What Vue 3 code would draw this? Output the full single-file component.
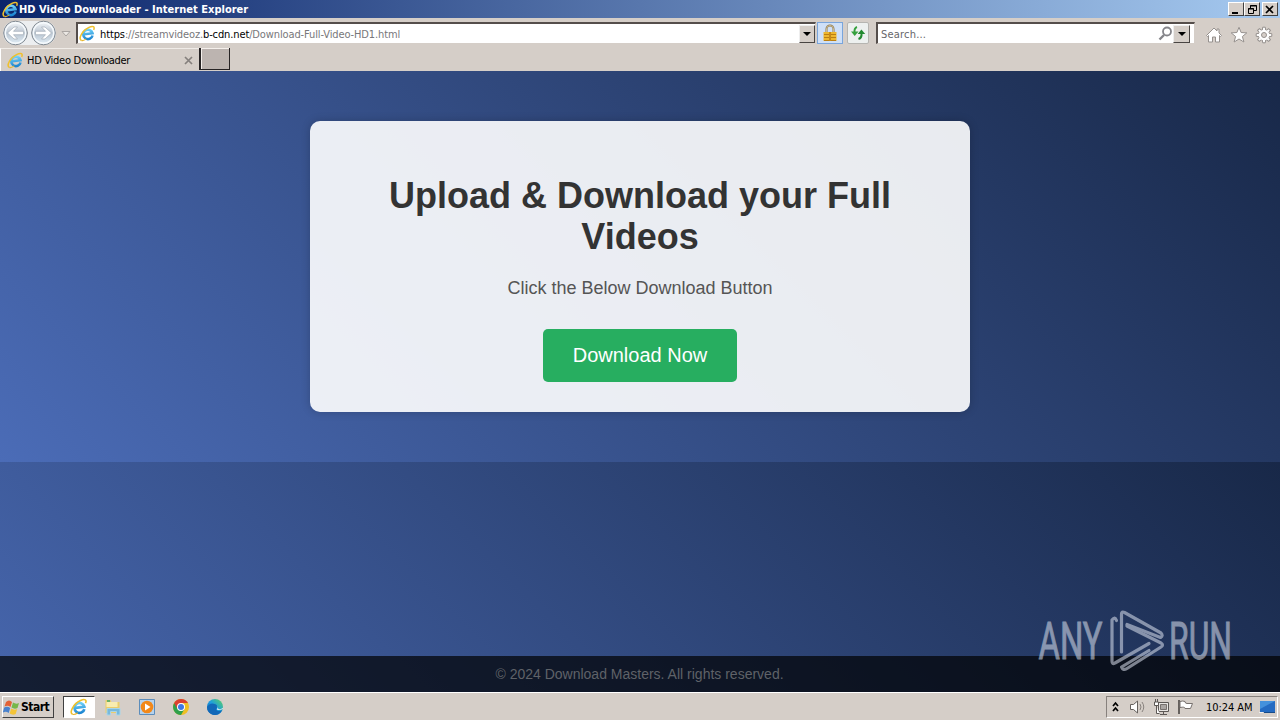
<template>
  <div class="screen">
    <svg class="defs" width="0" height="0">
      <defs>
        <linearGradient id="ieBlue" x1="0" y1="0" x2="0" y2="1">
          <stop offset="0" stop-color="#6fd0f8" />
          <stop offset="1" stop-color="#1c86d2" />
        </linearGradient>
        <linearGradient id="edgeFill" x1="0" y1="1" x2="1" y2="0">
          <stop offset="0" stop-color="#0c59a4" />
          <stop offset="0.5" stop-color="#1b9de2" />
          <stop offset="1" stop-color="#5fd35a" />
        </linearGradient>
        <linearGradient id="circleFill" x1="0" y1="0" x2="0" y2="1">
          <stop offset="0" stop-color="#f8fafc" />
          <stop offset="0.5" stop-color="#b9c4d0" />
          <stop offset="1" stop-color="#e4f1fa" />
        </linearGradient>
        <symbol id="ie" viewBox="0 0 18 18">
          <path d="M14 11.800A5 5 0 1 1 14.300 9.400H5.500" fill="none" stroke="url(#ieBlue)" stroke-width="2.700" transform="rotate(-8 9 9)" />
          <path d="M2.500 16.300C-.8 14.500 3 6 10.500 2.500c4.500-2.100 6.500-.6 5 2.700" fill="none" stroke="#efc02c" stroke-width="1.600" />
          <path d="M2.500 16.300q2.200.8 5.200-1.600" fill="none" stroke="#e6b630" stroke-width="1.200" />
        </symbol>
      </defs>
    </svg>

    <header class="titlebar">
      <svg class="title-icon" width="17" height="17"><use href="#ie" /></svg>
      <span class="title">HD Video Downloader - Internet Explorer</span>
      <div class="window-buttons">
        <button class="win"><svg width="14" height="11"><path d="M3 9h6" stroke="#000" stroke-width="2" /></svg></button>
        <button class="win"><svg width="14" height="11"><path d="M5.500 4V1.500h6v5H9M5 2h7M3.500 4.500h5v5h-5zM3 5h6" fill="none" stroke="#000" /></svg></button>
        <button class="win close"><svg width="14" height="11"><path d="M3 2l7 7M10 2l-7 7" stroke="#000" stroke-width="1.700" /></svg></button>
      </div>
    </header>

    <nav class="toolbar">
      <svg class="history" width="74" height="30">
        <path d="M15 3H44a12 12 0 0 1 0 24H15a12 12 0 0 1 0-24" fill="#eceef0" />
        <g v-for="cx in [15.5, 43.5]" :key="cx">
          <circle :cx="cx" cy="15" r="11.800" fill="url(#circleFill)" stroke="#7f878f" />
          <circle :cx="cx" cy="15" r="10.200" fill="none" stroke="#f5f9fc" stroke-width="1.400" />
        </g>
        <path d="M7.500 15l6.500-6h3.500l-4 4.300h10v3.400h-10l4 4.300H14z" fill="#fff" stroke="#a4aeb8" stroke-width=".7" />
        <path d="M51.500 15L45 9h-3.500l4 4.300h-10v3.400h10l-4 4.300H45z" fill="#fff" stroke="#a4aeb8" stroke-width=".7" />
        <path d="M62 13.500h8l-4 4.500z" fill="#ece8e4" stroke="#aaa5a2" />
      </svg>
      <div class="field address">
        <svg width="17" height="17"><use href="#ie" /></svg>
        <span class="url"><b>https</b>://streamvideoz.<b>b-cdn.net</b>/Download-Full-Video-HD1.html</span>
        <span class="dropdown"></span>
      </div>
      <span class="tool lock">
        <svg width="16" height="18">
          <path d="M4.500 8V5a3.500 3.500 0 0 1 7 0v3" fill="none" stroke="#8c7650" stroke-width="2" />
          <path d="M4.500 8V5a3.500 3.500 0 0 1 7 0v3" fill="none" stroke="#e6d9a8" stroke-width=".7" />
          <path d="M1.500 8h13v9h-13z" fill="#eeb72d" />
          <path d="M2 10.500h12M2 13.500h12M2 16.500h12" stroke="#bb7f12" />
          <path d="M7 8h2v9H7z" fill="#c68a17" />
        </svg>
      </span>
      <span class="tool refresh">
        <svg width="16" height="16">
          <path d="M7 2Q4 3 4.500 8" fill="none" stroke="#35a13d" stroke-width="2" />
          <path d="M1 6.500h7.500L4.700 11z" fill="#35a13d" />
          <path d="M8.500 14Q12 13 11.500 8" fill="none" stroke="#238a31" stroke-width="2" />
          <path d="M7.700 9h7.500L11.400 4.500z" fill="#238a31" />
        </svg>
      </span>
      <div class="field search">
        <span class="placeholder">Search...</span>
        <svg width="15" height="15"><circle cx="9" cy="5.500" r="4" fill="none" stroke="#85858a" stroke-width="1.800" /><path d="M6 9l-4.500 4.500" stroke="#85858a" stroke-width="2.400" /></svg>
        <span class="dropdown"></span>
      </div>
      <div class="commands">
        <svg width="18" height="18"><path d="M1.500 9.500L9 2l3 3V3h2v4l2.500 2.500-1 1-1-1V16h-4v-5h-3v5h-4V9.500l-1 1z" fill="#fff" stroke="#96918e" /></svg>
        <svg width="18" height="18"><path d="M9 1.300l2.100 5.200 5.700.4-4.400 3.600 1.500 5.500L9 13l-4.900 3 1.500-5.500L1.200 6.900l5.700-.4z" fill="#fff" stroke="#96918e" /></svg>
        <svg width="18" height="18">
          <path v-for="n in 8" :key="n" d="M7.300 4.500l.4-3.300h2.600l.4 3.300z" :transform="`rotate(${n * 45} 9 9)`" fill="#fff" stroke="#96918e" />
          <circle cx="9" cy="9" r="5.300" fill="#fff" />
          <circle cx="9" cy="9" r="2.500" fill="#d6cfc9" stroke="#96918e" />
        </svg>
      </div>
    </nav>

    <div class="tabs">
      <div class="tab">
        <svg width="17" height="17"><use href="#ie" /></svg>
        <span class="tab-title">HD Video Downloader</span>
        <svg class="tab-close" width="9" height="9"><path d="M1 1l7 7M8 1L1 8" stroke="#85807d" stroke-width="1.700" /></svg>
      </div>
      <div class="new-tab"></div>
    </div>

    <main class="page">
      <section class="card">
        <h1>Upload &amp; Download your Full Videos</h1>
        <p>Click the Below Download Button</p>
        <button class="download">Download Now</button>
      </section>
      <footer>© 2024 Download Masters. All rights reserved.</footer>
      <svg class="watermark" width="220" height="76" viewBox="1035 602 220 76">
        <text x="1038.500" y="659" textLength="64" lengthAdjust="spacingAndGlyphs">ANY</text>
        <text x="1169" y="659" textLength="63" lengthAdjust="spacingAndGlyphs">RUN</text>
        <g fill="none" stroke-width="3.200" stroke-linejoin="round" stroke-linecap="round">
          <path d="M1116.500 620.500Q1115 616 1112 620V661Q1112 665 1115 663L1149 643.500" />
          <path d="M1121.500 652V614Q1121.500 611 1124.500 612.500L1161 633Q1163.500 636 1160.500 637.500L1127 624.500" />
          <path d="M1127 626L1161 643Q1164 645 1161 647L1127 668.500Q1123 671 1121.500 667L1149 650.500" />
        </g>
      </svg>
    </main>

    <div class="taskbar">
      <button class="start">
        <svg width="18" height="17">
          <path d="M3 3Q6 0 9 3L7.500 8Q5 6 1.500 7.500z" fill="#e36236" />
          <path d="M10 3.500q3 2 6 .5L14.500 9q-3 1.500-6-.5z" fill="#76b74a" />
          <path d="M1.200 8.500Q4.500 7 7.200 9L5.700 14Q3 12-.2 13.500z" fill="#4a82cd" />
          <path d="M8.200 9.500q3 2 6 .5l-1.500 5q-3 1.500-6-.5z" fill="#f4c437" />
        </svg>
        <span class="start-label">Start</span>
      </button>
      <div class="apps">
        <span class="app active"><svg width="18" height="18"><use href="#ie" /></svg></span>
        <span class="app">
          <svg width="18" height="18">
            <path d="M1.500 2h5l1 2h8v11h-14z" fill="#e9cd6c" />
            <path d="M2.500 4h11v5h-11z" fill="#f8ecb0" />
            <path d="M3 3h3" stroke="#6bb267" stroke-width="2" />
            <path d="M3 17v-6.500h13V17h-3.500v-3.500h-6V17z" fill="#78b9dc" stroke="#a8d5e9" />
          </svg>
        </span>
        <span class="app">
          <svg width="18" height="18">
            <path d="M1.500 1.500h15v15h-15z" fill="#b5d2ed" stroke="#5c8dbb" />
            <circle cx="9" cy="9" r="6.300" fill="#f28819" />
            <path d="M7 5.500v7L12.500 9z" fill="#fff" />
          </svg>
        </span>
        <span class="app">
          <svg width="18" height="18">
            <circle cx="9" cy="9" r="8" fill="#efbf23" />
            <path d="M2.100 5A8 8 0 0 0 9 17l3.500-6L9 9z" fill="#2fa04c" />
            <path d="M2.100 5A8 8 0 0 1 16 5H9v4L5.500 11z" fill="#da4031" />
            <circle cx="9" cy="9" r="4" fill="#fff" />
            <circle cx="9" cy="9" r="3" fill="#3e78e5" />
          </svg>
        </span>
        <span class="app">
          <svg width="18" height="18">
            <circle cx="9" cy="9" r="8" fill="url(#edgeFill)" />
            <path d="M1 9Q4 4 9 6q3 1 2 4-2 2 1 3 3 .5 4.500-1.500A8 8 0 0 1 7 16.700Q1 15 1 9" fill="#1268b8" />
            <path d="M10.500 8q2 1 .3 3.200Q12.500 13 17 11v-1q-3 2-5 .5 0-2-1.500-2.500" fill="#dcebf2" />
          </svg>
        </span>
      </div>
      <div class="tray">
        <svg class="chevrons" width="7" height="12"><path d="M1 5l2.500-3L6 5M1 10l2.500-3L6 10" fill="none" stroke="#000" stroke-width="1.700" /></svg>
        <svg class="sound" width="18" height="16"><path d="M1.500 5.500h3L8.500 2v12l-4-3.500h-3z" fill="#fff" stroke="#66615e" /><path d="M11 5q2 3 0 6M13 3q3.500 5 0 10" fill="none" stroke="#88827e" /></svg>
        <svg class="network" width="18" height="17"><path d="M5.500 3.500h10v9h-10zM7 15.500h7M10.500 13v2" fill="#e8e5e2" stroke="#5d5855" /><path d="M7.500 5.500h6v5h-6z" fill="#aaa5a2" stroke="#77716e" /><path d="M1.500 3h4v3.500h-4zM2.500 0v3M4.500 0v3M3.500 7v7.500h3" fill="#fff" stroke="#5d5855" /></svg>
        <svg class="flag" width="17" height="16"><path d="M2 1v14" stroke="#66615e" stroke-width="2" /><path d="M3 2.500q3-1 5 0 0 2 2 2h5.500l-2 5H8q0-2-5-1z" fill="#fff" stroke="#77716e" /></svg>
        <span class="clock">10:24 AM</span>
        <svg class="desktop" width="17" height="14"><path d="M1 1h15v11H1z" fill="#246bc2" /><path d="M1 1h15L1 9z" fill="#4491dc" /><path d="M0 12.500h4" stroke="#eee" /><path d="M5 12.500h11" stroke="#174b89" /></svg>
      </div>
    </div>
  </div>
</template>

<script setup>
</script>

<style>
body {
  margin: 0;
  overflow: hidden;
}
</style>

<style scoped>
.screen {
  width: 1280px;
  height: 720px;
  display: flex;
  flex-direction: column;
  background: #d5cec8;
  font-family: "DejaVu Sans Condensed", "DejaVu Sans", sans-serif;
  font-size: 11px;
  color: #000;
  overflow: hidden;
}

.screen * {
  box-sizing: border-box;
}

.defs {
  position: absolute;
}

svg {
  display: block;
  flex: none;
}

button {
  font-family: inherit;
  padding: 0;
}

.titlebar {
  height: 18px;
  flex: none;
  display: flex;
  align-items: center;
  padding: 0 2px;
  background: linear-gradient(90deg, #0a246a, #a6caf0);
  color: #fff;
}

.title {
  font-weight: bold;
  white-space: nowrap;
  letter-spacing: 0.02px;
}

.window-buttons {
  display: flex;
  margin-left: auto;
}

.win {
  width: 16px;
  height: 14px;
  background: #d5cec8;
  border: 1px solid;
  border-color: #fff #404040 #404040 #fff;
}

.win.close {
  margin-left: 2px;
}

.toolbar {
  height: 30px;
  flex: none;
  display: flex;
  align-items: center;
}

.history {
  margin-right: 2px;
}

.field {
  height: 22px;
  display: flex;
  align-items: center;
  background: #fff;
  border: 1px solid #d5cec8;
  border-top: 2px solid #554e4b;
  border-left: 2px solid #554e4b;
}

.address {
  width: 740px;
  padding-left: 1px;
}

.url {
  margin: 1px 0 0 4px;
  color: #77777a;
  white-space: nowrap;
  letter-spacing: -0.12px;
}

.url b {
  color: #000;
  font-weight: normal;
}

.dropdown {
  width: 16px;
  height: 18px;
  margin-left: auto;
  display: flex;
  align-items: center;
  justify-content: center;
  background: #d5cec8;
  border: 1px solid;
  border-color: #eee #484442 #484442 #eee;
}

.dropdown::after {
  content: "";
  border: 4px solid transparent;
  border-top-color: #000;
  border-bottom: 0;
}

.tool {
  display: flex;
  align-items: center;
  justify-content: center;
  height: 22px;
}

.lock {
  width: 26px;
  margin-left: 1px;
  background: #cfe0f7;
  border: 1px solid #79a5dc;
}

.refresh {
  width: 22px;
  margin: 0 7px 0 4px;
  background: #edf0ef;
  border: 1px solid #b6b5b1;
  border-radius: 2px;
}

.search {
  width: 319px;
  padding: 0 4px 0 3px;
}

.search .dropdown {
  width: 17px;
  margin-left: 0;
}

.placeholder {
  flex: 1;
  margin-top: 1px;
  color: #66666a;
  letter-spacing: 0.2px;
}

.commands {
  display: flex;
  gap: 7px;
  margin: 3px 0 0 10px;
}

.tabs {
  height: 23px;
  flex: none;
  display: flex;
}

.tab {
  width: 199px;
  display: flex;
  align-items: center;
  padding: 0 6px 0 6px;
  border-top: 1px solid #f0ece8;
  border-left: 1px solid #fff;
}

.tab-title {
  margin-left: 3px;
  white-space: nowrap;
  letter-spacing: -0.28px;
}

.tab-close {
  margin-left: auto;
}

.new-tab {
  width: 31px;
  height: 22px;
  background: #bcb4b0;
  border: solid #262324;
  border-width: 0 1px 1px 2px;
  box-shadow: inset 1px 1px #f5f0ec;
}

.page {
  height: 621px;
  flex: none;
  position: relative;
  display: flex;
  flex-direction: column;
  align-items: center;
  padding-top: 50px;
  font-family: "Liberation Sans", Arial, sans-serif;
  background: linear-gradient(45deg, #4b6cb7, #182848) 0 0 / 100% 391px;
}

.card {
  width: 660px;
  height: 291px;
  flex: none;
  padding: 54px 30px 29px;
  text-align: center;
  background: rgba(255, 255, 255, 0.9);
  border-radius: 10px;
  box-shadow: 0 0 10px rgba(0, 0, 0, 0.2);
}

h1 {
  margin: 0 0 21px;
  font-size: 36px;
  line-height: 41px;
  color: #333;
}

.card p {
  margin: 0 0 30px;
  font-size: 18px;
  line-height: 21px;
  color: #555;
}

.download {
  width: 194px;
  height: 53px;
  border: 0;
  border-radius: 5px;
  background: #27ae60;
  color: #fff;
  font-size: 20px;
}

footer {
  width: 100%;
  height: 36px;
  margin-top: auto;
  padding-right: 1px;
  line-height: 36px;
  text-align: center;
  font-size: 14px;
  color: #5f6268;
  background: rgba(0, 0, 0, 0.7);
}

.watermark {
  position: absolute;
  right: 25px;
  bottom: 14px;
  font-family: Roboto, sans-serif;
  font-size: 52px;
  fill: #dce2ef;
  stroke: #dce2ef;
  opacity: 0.55;
}

.watermark text {
  stroke-width: 0.9px;
}

.taskbar {
  height: 28px;
  flex: none;
  display: flex;
  align-items: center;
  border-top: 1px solid #fff;
  padding: 1px 2px 0;
}

.start {
  width: 52px;
  height: 22px;
  display: flex;
  align-items: center;
  background: #d5cec8;
  border: 1px solid;
  border-color: #fff #404040 #404040 #fff;
  font-size: 12px;
  font-weight: bold;
}

.start-label {
  letter-spacing: -0.5px;
}

.apps {
  display: flex;
  gap: 2px;
  margin-left: 9px;
}

.app {
  width: 32px;
  height: 22px;
  display: flex;
  align-items: center;
  justify-content: center;
}

.app.active {
  background: #fff;
  border: 1px solid;
  border-color: #404040 #fff #fff #404040;
}

.tray {
  width: 172px;
  height: 22px;
  margin-left: auto;
  display: flex;
  align-items: center;
  padding-left: 5px;
  border: 1px solid;
  border-color: #87817d #fff #fff #87817d;
}

.chevrons {
  margin-right: 10px;
}

.sound {
  margin-right: 6px;
}

.network {
  margin-right: 6px;
}

.clock {
  margin-left: 12px;
  white-space: nowrap;
  letter-spacing: -0.05px;
}

.desktop {
  margin-left: auto;
  margin-right: 1px;
}
</style>
